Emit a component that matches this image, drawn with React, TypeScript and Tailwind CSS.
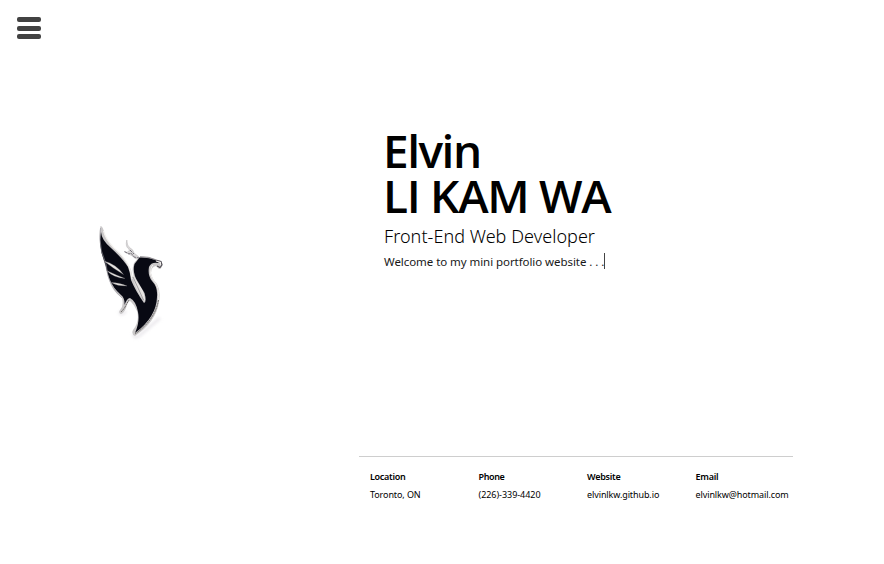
import React from "react";

const contacts = [
  { label: "Location", value: "Toronto, ON", labelStyle: "tracking-[-0.3px]", valueStyle: "tracking-[-0.1px]" },
  { label: "Phone", value: "(226)-339-4420", labelStyle: "tracking-[-0.4px]", valueStyle: "tracking-[-0.05px]" },
  { label: "Website", value: "elvinlkw.github.io", labelStyle: "tracking-[-0.25px]", valueStyle: "tracking-[-0.1px]" },
  { label: "Email", value: "elvinlkw@hotmail.com", labelStyle: "tracking-[-0.25px]", valueStyle: "tracking-[-0.1px]" },
];

function Phoenix() {
  return (
    <svg width="80" height="125" viewBox="90 220 80 125" aria-hidden="true">
      <defs>
        <filter id="soft" x="-20%" y="-20%" width="140%" height="140%"><feGaussianBlur stdDeviation="1.6" /></filter>
      </defs>
      <path d="M133 334Q135 340 140 335L160 318M120 311Q120 317 126 311" fill="none" stroke="#d8d4dc" strokeWidth="3" opacity=".5" filter="url(#soft)" />
      {/* Polished metal outline */}
      <path d="M100.5 226Q103 226 104.5 234Q107 241 115 249Q127 260 131 270Q132 276 134 280L145 301Q144 290 138 284Q130 274 134 263L139 257Q148 256 155 259Q161 260 162.5 264Q162 269 159 269L156 266Q151 267 151 273Q152 279 157 284Q161 291 159 302Q156 322 135 336Q131 334 133 330Q140 321 137 311Q133 303 130 301Q128 301 126 308Q124 313 121 314Q118 313 120 310Q124 306 122 298Q112 291 109 280Q107 274 105 265Q103 259 101 249Q98 237 100.5 226Z" fill="#cac8c9" />
      {/* Dark enamel wing and body */}
      <path d="M101 232Q101.5 240 111 248Q123 259 128 267Q130 272 131 280Q135 290 144 303Q147 302 144.5 293L138 282Q132 273 134.5 264L139.5 257.5Q148 257 157 260.5L159 263Q151 261.5 149 267Q147.5 275 152 281Q158 287 157 297Q156.5 317 135 333Q140 322 138 312Q136 301 130 298Q127 298 124.5 305Q125 298 121 295Q113 288 109.5 279Q107 272 105.5 265L101.5 253Q99 241 101 232Z" fill="#080913" />
      <path d="M104 261Q116 264 123.5 274.5Q114 269 104 261ZM106.5 270.5Q116 275 125 278.5Q114 278 106.5 270.5ZM111 282.5Q120 282.5 127 286Q117 286 111 282.5Z" fill="#e6e3df" stroke="#77747b" strokeWidth=".3" />
      <path d="M100.5 228Q99 239 101.5 251L106 264L108 276Q112 289 122 298" fill="none" stroke="#99979f" strokeWidth=".6" />
      <path d="M103.5 231Q106 240 114 248Q127 259 130.5 271L132 279" fill="none" stroke="#f4f2ef" strokeWidth="1.1" />
      {/* Tapered opening between the wing and neck */}
      <path d="M133 267Q132 273 136 280L142.5 291L145 301L140 295Q135 287 133 277Z" fill="#e4e2e0" />
      <path d="M133 277L143.5 300" fill="none" stroke="#77747a" strokeWidth=".6" />
      {/* Crest and reflective edges */}
      <path d="M126.8 240Q127 246 130 248Q133 249 134 253L139 257L136 259Q132 255 124.5 252Q130 253 129 249Q125 247 126.8 240Z" fill="#dad8d9" stroke="#b5b2b5" strokeWidth=".5" />
      <path d="M124.5 251.5L129 254L131 253L134 257L139 258M130 250L134 254" fill="none" stroke="#6b6870" strokeWidth=".9" strokeDasharray="3 .8" />
      <path d="M140 256.7Q149 256.5 155 259.5" fill="none" stroke="#77747a" strokeWidth=".8" />
      <path d="M155 260L161 261.5L162 265L160 267.5L157 266" fill="none" stroke="#4b4850" strokeWidth="1.1" />
      <path d="M156 261L160.5 262.5L160.5 265" fill="none" stroke="#eeecea" strokeWidth="1.1" />
      <path d="M153 265Q150.5 267 150.5 274Q151.5 279 156.5 285Q159.5 291 158.5 302" fill="none" stroke="#f2f0ee" strokeWidth="1" />
      <path d="M158.5 300Q155 320 135 334M121 312Q125 308 126 305L129 300" fill="none" stroke="#625f5b" strokeWidth=".9" strokeDasharray="2 .7" />
    </svg>
  );
}

export default function App() {
  return (
    <main className="flex h-[564px] w-[884px] overflow-hidden bg-white font-['Noto_Sans',sans-serif] text-black">
      <aside className="flex w-[359px] flex-col">
        <button aria-label="Menu" className="ml-[17px] mt-[17px] flex h-[22px] w-6 flex-col justify-between">
          <span className="h-[5px] w-6 rounded-[2px] bg-[#424242]" />
          <span className="h-[5px] w-6 rounded-[2px] bg-[#424242]" />
          <span className="h-[5px] w-6 rounded-[2px] bg-[#424242]" />
        </button>
        <div className="ml-[90px] mt-[181px]"><Phoenix /></div>
      </aside>
      <section className="flex w-[434px] flex-col">
        <header className="h-[456px] whitespace-nowrap pl-[25px] pt-[128px]">
          <h1 className="-ml-px font-['Open_Sans',sans-serif] text-[46px] font-semibold leading-[45px]">
            <span className="block"><span className="tracking-[-1.5px]">Elvin</span></span>
            <span className="block"><span className="tracking-[-1.3px]">LI KAM WA</span></span>
          </h1>
          <p className="mt-[5px] text-[18px] font-light leading-[26px] tracking-[0.05px]">Front-End Web Developer</p>
          <p className="mt-px flex items-center text-[11.5px] leading-6 text-[#181818]"><span className="tracking-[-0.06px]">Welcome to my mini portfolio website . . .</span><span className="mb-[2px] h-[16px] w-px bg-[#444]" /></p>
        </header>
        <footer className="grid grid-cols-4 border-t border-[#cecece] pt-[11px]">
          {contacts.map((c) => (
            <div key={c.label} className="whitespace-nowrap pl-[11px] text-[9px] leading-[18px]">
              <h2 className="font-semibold"><span className={c.labelStyle}>{c.label}</span></h2>
              <p><span className={c.valueStyle}>{c.value}</span></p>
            </div>
          ))}
        </footer>
      </section>
    </main>
  );
}
